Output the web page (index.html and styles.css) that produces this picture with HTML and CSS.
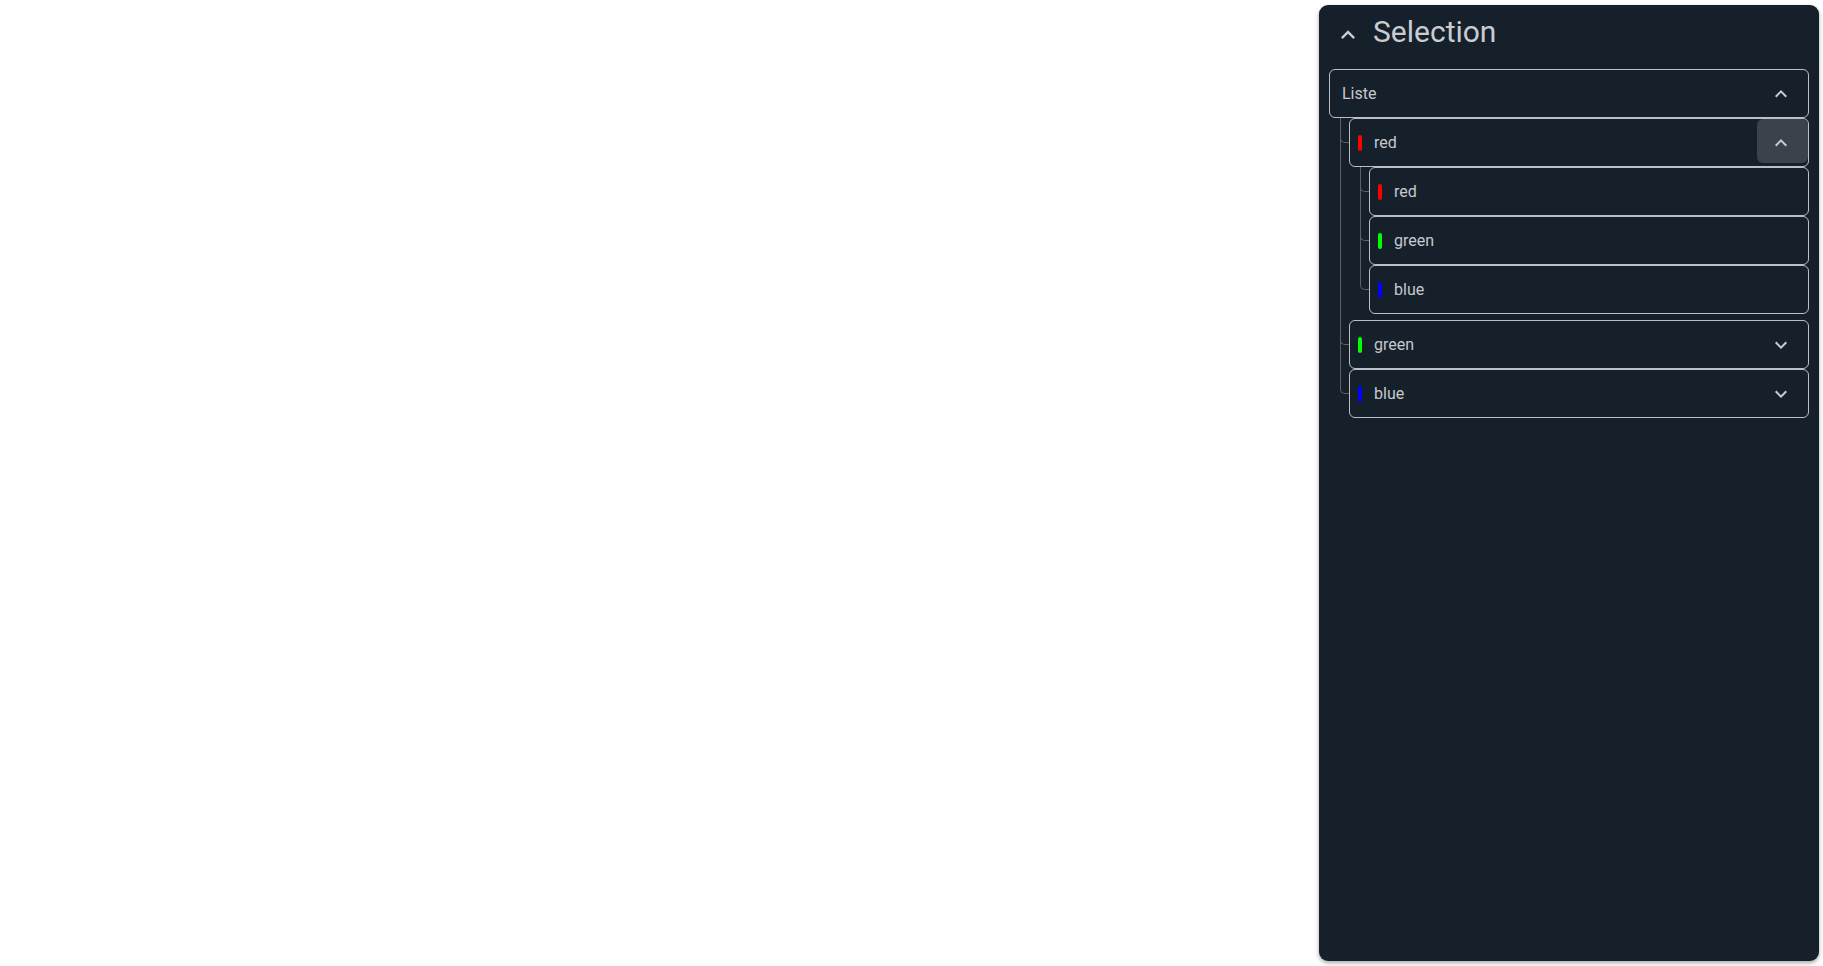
FILE: index.html
```html
<!DOCTYPE html>
<html lang="en">
<head>
<meta charset="utf-8">
<title>Selection</title>
<link rel="stylesheet" href="styles.css">
</head>
<body>
<div class="page">
  <aside class="panel">
    <div class="panel-header">
      <svg class="hdr-icon" viewBox="0 0 24 24"><path d="M12 8l-6 6 1.41 1.41L12 10.83l4.59 4.58L18 14z"/></svg>
      <h2 class="title">Selection</h2>
    </div>
    <div class="tree">
      <div class="row root">
        <span class="label">Liste</span>
        <span class="toggle"><svg viewBox="0 0 24 24"><path d="M12 8l-6 6 1.41 1.41L12 10.83l4.59 4.58L18 14z"/></svg></span>
      </div>
      <div class="children">
        <div class="node">
          <div class="row">
            <span class="bar red"></span>
            <span class="label">red</span>
            <span class="toggle active"><svg viewBox="0 0 24 24"><path d="M12 8l-6 6 1.41 1.41L12 10.83l4.59 4.58L18 14z"/></svg></span>
          </div>
          <div class="children nested">
            <div class="node">
              <div class="row"><span class="bar red"></span><span class="label">red</span></div>
            </div>
            <div class="node">
              <div class="row"><span class="bar green"></span><span class="label">green</span></div>
            </div>
            <div class="node">
              <div class="row"><span class="bar blue"></span><span class="label">blue</span></div>
            </div>
          </div>
        </div>
        <div class="node">
          <div class="row">
            <span class="bar green"></span>
            <span class="label">green</span>
            <span class="toggle"><svg viewBox="0 0 24 24"><path d="M16.59 8.59L12 13.17 7.41 8.59 6 10l6 6 6-6z"/></svg></span>
          </div>
        </div>
        <div class="node">
          <div class="row">
            <span class="bar blue"></span>
            <span class="label">blue</span>
            <span class="toggle"><svg viewBox="0 0 24 24"><path d="M16.59 8.59L12 13.17 7.41 8.59 6 10l6 6 6-6z"/></svg></span>
          </div>
        </div>
      </div>
    </div>
  </aside>
</div>
</body>
</html>
```
FILE: styles.css
```css
html, body {
  margin: 0;
  padding: 0;
  background: #ffffff;
}

body {
  font-family: Roboto, "Liberation Sans", sans-serif;
}

.page {
  display: flex;
  justify-content: flex-end;
  padding: 5px 4px 5px 0;
  height: 966px;
  box-sizing: border-box;
}

.panel {
  width: 500px;
  height: 956px;
  box-sizing: border-box;
  background: #16202b;
  border-radius: 9px;
  box-shadow: 0 2px 4px rgba(0, 0, 0, 0.35);
  padding: 0 10px;
}

.panel-header {
  display: flex;
  align-items: center;
  padding: 9px 0 19px 5px;
  height: 36px;
}

.hdr-icon {
  width: 28px;
  height: 28px;
  fill: #c9ccd0;
  margin-top: 6px;
  margin-right: 11px;
  flex: none;
}

.title {
  margin: 0;
  font-size: 30px;
  line-height: 36px;
  font-weight: 400;
  color: #c9ccd0;
}

.row {
  display: flex;
  align-items: center;
  height: 49px;
  box-sizing: border-box;
  border: 1px solid #bcc0c4;
  border-radius: 6px;
  padding-left: 8px;
  color: #c6c9cd;
  font-size: 16px;
}

.row.root {
  padding-left: 12px;
}

.label {
  flex: 1;
  line-height: 20px;
}

.bar {
  width: 4px;
  height: 16px;
  border-radius: 2px;
  margin-right: 12px;
  flex: none;
}

.bar.red { background: #ff0000; }
.bar.green { background: #00ff00; }
.bar.blue { background: #0000ff; }

.toggle {
  position: relative;
  width: 51px;
  box-sizing: border-box;
  padding-right: 4px;
  align-self: stretch;
  display: flex;
  align-items: center;
  justify-content: center;
  flex: none;
}

.toggle svg {
  position: relative;
  width: 24px;
  height: 24px;
  fill: #c9ccd0;
}

.toggle.active::before {
  content: "";
  position: absolute;
  top: 0;
  left: 0;
  right: 0;
  height: 44px;
  background: #3b424c;
  border-radius: 6px;
}

.children {
  padding-left: 20px;
}

.children.nested {
  padding-bottom: 6px;
}

.node {
  position: relative;
}

.node::before {
  content: "";
  position: absolute;
  left: -9px;
  top: 0;
  width: 8px;
  height: 24px;
  border-left: 1px solid #5a6169;
  border-bottom: 1px solid #5a6169;
  border-bottom-left-radius: 5px;
}

.node:not(:last-child)::after {
  content: "";
  position: absolute;
  left: -9px;
  top: 0;
  bottom: 0;
  border-left: 1px solid #5a6169;
}
```
